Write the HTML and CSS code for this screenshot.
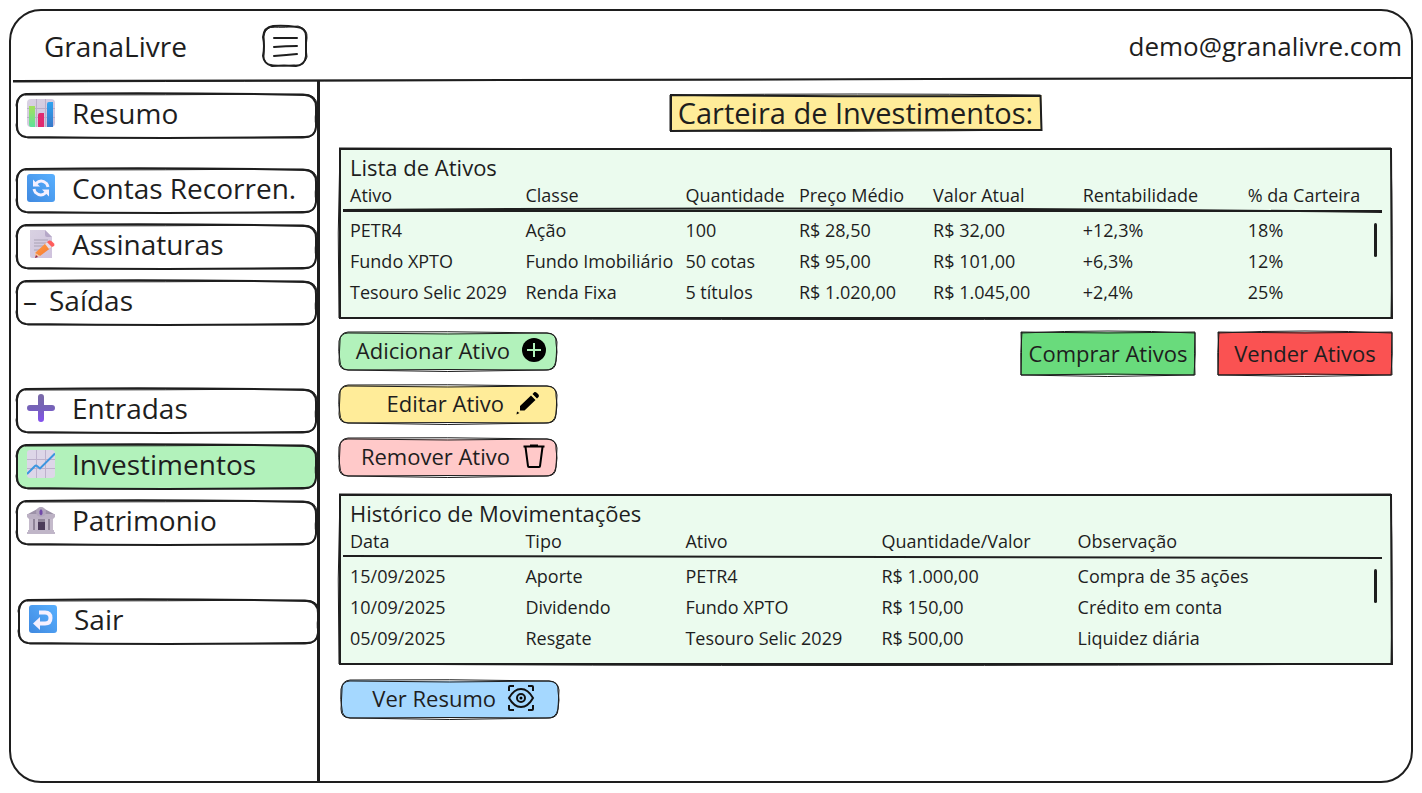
FILE: index.html
```html
<!DOCTYPE html>
<html lang="pt-BR">
<head>
<meta charset="utf-8">
<meta name="viewport" content="width=device-width, initial-scale=1">
<title>GranaLivre - Investimentos</title>
<link rel="stylesheet" href="styles.css">
</head>
<body>
<svg class="defs" aria-hidden="true">
  <defs>
    <linearGradient id="g-paper" x1="0" y1="0" x2="1" y2="1"><stop offset="0" stop-color="#d9d2e2"/><stop offset="1" stop-color="#cfc2dd"/></linearGradient>
    <linearGradient id="g-green" x1="0" y1="0" x2="0" y2="1"><stop offset="0" stop-color="#a6e05c"/><stop offset="1" stop-color="#5fe09a"/></linearGradient>
    <linearGradient id="g-blue" x1="0" y1="0" x2="0" y2="1"><stop offset="0" stop-color="#2fa3f0"/><stop offset="1" stop-color="#3978c8"/></linearGradient>
    <linearGradient id="g-tile" x1="1" y1="0" x2="0" y2="1"><stop offset="0" stop-color="#58b0ff"/><stop offset="1" stop-color="#4089e0"/></linearGradient>
    <linearGradient id="g-plus" x1="0" y1="0" x2="0" y2="1"><stop offset="0" stop-color="#7a6aa8"/><stop offset=".5" stop-color="#7562b8"/><stop offset="1" stop-color="#8450f0"/></linearGradient>
    <linearGradient id="g-pencil" x1="0" y1="0" x2="1" y2="1"><stop offset="0" stop-color="#ffa04a"/><stop offset="1" stop-color="#f5762e"/></linearGradient>
  </defs>
  <symbol id="box-nav" viewBox="0 0 300 45" preserveAspectRatio="none">
    <path class="fill" d="M10 1Q150 -1 288 2Q299 3 299 14L299 34Q298 44 288 44Q150 47 10 44Q1 43 1 33L1 11Q2 2 10 1Z"/>
    <path class="line" d="M10 1Q150 -1 288 2Q299 3 299 14L299 34Q298 44 288 44Q150 46 10 44Q1 43 1 33L1 11Q2 2 10 1Z"/>
    <path class="thin" d="M9 2Q150 2 286 1Q300 1 300 13Q297 25 299 33Q299 45 286 45Q150 44 12 45Q0 43 0 32Q3 22 0 12Q1 0 13 1"/>
  </symbol>
  <symbol id="box-button" viewBox="0 0 218 38" preserveAspectRatio="none">
    <path class="fill" d="M9 0Q109 2 208 1Q217 1 217 10L217 29Q217 38 208 38Q109 37 9 38Q0 38 0 29L0 10Q0 1 9 0Z"/>
    <path class="thin" d="M9 0Q109 -1 208 1Q217 1 218 10L217 29Q217 38 208 38Q109 41 9 38Q0 38 0 29L1 10Q0 1 9 0Z"/>
    <path class="thin" d="M9 1Q109 3 208 1Q218 2 217 11Q219 20 217 29Q215 39 205 38Q109 37 9 38Q1 37 1 29Q-1 20 0 9Q2 1 9 1"/>
  </symbol>
  <symbol id="box-square" viewBox="0 0 174 43" preserveAspectRatio="none">
    <path class="fill" d="M0 0H174V43H0Z"/>
    <path class="thin" d="M0 0Q87 2 174 0Q173 22 174 43Q87 41 0 43Q1 20 0 0Z"/>
    <path class="thin" d="M0 1Q87 -3 174 1Q175 22 173 43Q87 46 0 43Q-1 20 1 0Z"/>
  </symbol>
  <symbol id="box-title" viewBox="0 0 371 36" preserveAspectRatio="none">
    <path class="fill" d="M0 0H371V36H0Z"/>
    <path class="line" d="M1 0Q180 2 370 1L371 35Q180 34 1 36Z"/>
    <path class="thin" d="M0 0Q190 -2 370 0L371 35Q180 37 0 36Z"/>
  </symbol>
  <symbol id="box-panel" viewBox="0 0 1053 171" preserveAspectRatio="none">
    <path class="fill" d="M0 0H1053V171H0Z"/>
    <path class="line" d="M1 1L1052 1L1053 170L1 170Z"/>
    <path class="thin" d="M0 0Q520 2 1052 0Q1054 90 1052 170Q500 173 0 170Q-2 85 1 0"/>
  </symbol>
</svg>

<div class="app">
  <header class="topbar">
    <div class="brand">
      <span class="brand-name">GranaLivre</span>
      <button class="menu" type="button" aria-label="Menu">
        <svg viewBox="0 0 46 42" aria-hidden="true"><path d="M11 1Q22 0 35 2Q44 3 44 11V31Q43 40 34 41Q22 40 10 41Q2 39 1 31Q3 21 1 12Q2 2 11 1ZM12 13L35 13M12 22Q24 21 35 21M12 31Q25 30 35 29"/><path class="thin" d="M9 2Q25 3 36 1Q46 4 45 13Q43 22 45 32Q42 42 32 40Q22 42 11 40Q0 39 2 29L2 11Q3 2 12 2"/></svg>
      </button>
    </div>
    <span class="account">demo@granalivre.com</span>
    <svg class="topbar-line" viewBox="0 0 1400 6" preserveAspectRatio="none" aria-hidden="true"><path class="line" d="M2 4Q700 5 1400 1"/><path class="thin" d="M2 5Q600 3 1400 1"/></svg>
  </header>

  <div class="body">
    <nav class="sidebar" aria-label="Principal">
      <ul class="group">
        <li><a class="item" href="#resumo"><svg class="sketch"><use href="#box-nav"/></svg>
          <svg class="emoji" viewBox="0 0 28 28" aria-hidden="true"><rect width="28" height="28" rx="4" fill="url(#g-paper)"/><path d="M9.500 0V28M18.500 0V28M0 9.500H28M0 18.500H28" stroke="#b9aec8"/><path d="M2 7H8V28H4Q2 28 2 25Z" fill="url(#g-green)"/><path d="M11 16Q11 14 13 14H17V28H11Z" fill="#e02a70"/><path d="M20 5Q20 3 22 3H26V28H20Z" fill="url(#g-blue)"/></svg>
          Resumo</a></li>
      </ul>
      <ul class="group">
        <li><a class="item" href="#contas"><svg class="sketch"><use href="#box-nav"/></svg>
          <svg class="emoji" viewBox="0 0 28 28" aria-hidden="true"><rect width="28" height="28" rx="3" fill="url(#g-tile)"/><path d="M9 9.500Q14 4.500 19.500 9.500Q20.500 11 21 13M19 18.500Q14 23.500 8.500 18.500Q7.500 17 7 15" fill="none" stroke="#f5f0ff" stroke-width="3"/><path d="M6 5.500V12.500H13ZM22 22.500V15.500H15Z" fill="#f5f0ff"/></svg>
          Contas Recorren.</a></li>
        <li><a class="item" href="#assinaturas"><svg class="sketch"><use href="#box-nav"/></svg>
          <svg class="emoji" viewBox="0 0 28 28" aria-hidden="true"><path d="M3 0H18L25 7V28H5Q3 28 3 26Z" fill="url(#g-paper)"/><path d="M18 0V5Q18 7 20 7H25Z" fill="#b6a8c8"/><path d="M7 10H21M7 13H21M7 16H19M7 20H13" stroke="#a9a2b4"/><path d="M8 23L20 12L25 17L13 26Z" fill="url(#g-pencil)"/><path d="M8 23L13 26L8 28Z" fill="#f5c29a"/><path d="M9 25L8 28L11 27Z" fill="#8c2454"/><path d="M18 14L20 12L25 17L22 19Z" fill="#e6dcea"/><path d="M20 12L22 10.500Q23.500 10 25 11.500L27 13.500Q28 15 27 16L25 17Z" fill="#ff5c5c"/></svg>
          Assinaturas</a></li>
        <li><a class="item item-text" href="#saidas"><svg class="sketch"><use href="#box-nav"/></svg><span>–</span>Saídas</a></li>
      </ul>
      <ul class="group group-entries">
        <li><a class="item" href="#entradas"><svg class="sketch"><use href="#box-nav"/></svg>
          <svg class="emoji" viewBox="0 0 28 28" aria-hidden="true"><path d="M11 3Q11 0 14 0T17 3V11H25Q28 11 28 14T25 17H17V25Q17 28 14 28T11 25V17H3Q0 17 0 14T3 11H11Z" fill="url(#g-plus)"/></svg>
          Entradas</a></li>
        <li><a class="item item-active" href="#investimentos" aria-current="page"><svg class="sketch"><use href="#box-nav"/></svg>
          <svg class="emoji" viewBox="0 0 28 28" aria-hidden="true"><rect width="28" height="28" rx="3" fill="#ddd6e8"/><path d="M9.500 0V28M18.500 0V28M0 9.500H28M0 18.500H28" stroke="#bdb1cc"/><path d="M0 24L8 16Q9 15 10 16L13 18.500L28 3.500" fill="none" stroke="#3b96e0" stroke-width="2"/></svg>
          Investimentos</a></li>
        <li><a class="item" href="#patrimonio"><svg class="sketch"><use href="#box-nav"/></svg>
          <svg class="emoji" viewBox="0 0 28 28" aria-hidden="true"><rect x="2" y="12" width="24" height="13" fill="#8f8498"/><path d="M11 16H18V25H11Z" fill="#4c3c5a"/><path d="M2 13H6V25H2ZM8 13H11V25H8ZM18 13H21V25H18ZM23 13H26V25H23Z" fill="#c4bacb"/><path d="M1 8L14 1L27 8Z" fill="#9d92a8"/><path d="M0 8H28V11L26 13H2L0 11Z" fill="#bcb1c4"/><path d="M1 24H27V26H28V28H0V26H1Z" fill="#c0b6c8"/><circle cx="14" cy="6" r="5" fill="#b3a7be"/><path d="M14 3L15.500 5V8L14 9.500L12.500 8V5Z" fill="#714aa8"/></svg>
          Patrimonio</a></li>
      </ul>
      <ul class="group group-exit">
        <li><a class="item" href="#sair"><svg class="sketch"><use href="#box-nav"/></svg>
          <svg class="emoji" viewBox="0 0 28 28" aria-hidden="true"><rect width="28" height="28" rx="3" fill="url(#g-tile)"/><path d="M10 7.500H16Q21.500 7.500 21.500 13T16 18.500H9" fill="none" stroke="#f5f0ff" stroke-width="4"/><path d="M11 12V25L4 18.500Z" fill="#f5f0ff"/></svg>
          Sair</a></li>
      </ul>
    </nav>

    <main class="content">
      <h1 class="title"><svg class="sketch" aria-hidden="true"><use href="#box-title"/></svg>Carteira de Investimentos:</h1>

      <section class="panel">
        <svg class="sketch" aria-hidden="true"><use href="#box-panel"/></svg>
        <h2 id="ativos">Lista de Ativos</h2>
        <table class="table" aria-labelledby="ativos">
          <colgroup><col class="col-first"><col class="col-second"><col class="col-quantity"><col class="col-price"><col class="col-value"><col class="col-return"><col></colgroup>
          <thead><tr><th>Ativo</th><th>Classe</th><th>Quantidade</th><th>Preço Médio</th><th>Valor Atual</th><th>Rentabilidade</th><th>% da Carteira</th></tr></thead>
          <tbody>
            <tr><td>PETR4</td><td>Ação</td><td>100</td><td>R$ 28,50</td><td>R$ 32,00</td><td>+12,3%</td><td>18%</td></tr>
            <tr><td>Fundo XPTO</td><td>Fundo Imobiliário</td><td>50 cotas</td><td>R$ 95,00</td><td>R$ 101,00</td><td>+6,3%</td><td>12%</td></tr>
            <tr><td>Tesouro Selic 2029</td><td>Renda Fixa</td><td>5 títulos</td><td>R$ 1.020,00</td><td>R$ 1.045,00</td><td>+2,4%</td><td>25%</td></tr>
          </tbody>
        </table>
        <svg class="rule" viewBox="0 0 1040 6" preserveAspectRatio="none" aria-hidden="true"><path class="line" d="M0 3Q500 -1 1040 5"/><path class="line" d="M0 4Q500 5 1040 4"/></svg>
        <span class="thumb"></span>
      </section>

      <div class="actions">
        <div class="stack">
          <button class="btn btn-add" type="button"><svg class="sketch"><use href="#box-button"/></svg>Adicionar Ativo
            <svg class="icon" viewBox="0 0 26 26" aria-hidden="true"><circle cx="13" cy="13" r="12"/><path d="M13 6V20M6 13H20" stroke="#b2f2bb" stroke-width="2"/></svg></button>
          <button class="btn btn-edit" type="button"><svg class="sketch"><use href="#box-button"/></svg>Editar Ativo
            <svg class="icon" viewBox="0 0 26 26" aria-hidden="true"><path d="M5 16L16 5.500L20.500 10L9.500 20.500L5 20.500ZM17.500 4L19.500 2Q20.500 1.500 22 3L23.500 4.500Q24.500 6 23.500 7L22 8.500ZM2 21.500L4.500 23L1.500 24.500Z"/></svg></button>
          <button class="btn btn-remove" type="button"><svg class="sketch"><use href="#box-button"/></svg>Remover Ativo
            <svg class="icon" viewBox="0 0 26 26" aria-hidden="true"><path d="M2.500 3.500H23.500M9 2.500H17M4.500 4L7 23Q7 24 8 24H18Q19 24 19 23L21.500 4" fill="none" stroke="#000" stroke-width="2"/></svg></button>
        </div>
        <div class="trade">
          <button class="btn btn-buy" type="button"><svg class="sketch"><use href="#box-square"/></svg>Comprar Ativos</button>
          <button class="btn btn-sell" type="button"><svg class="sketch"><use href="#box-square"/></svg>Vender Ativos</button>
        </div>
      </div>

      <section class="panel">
        <svg class="sketch" aria-hidden="true"><use href="#box-panel"/></svg>
        <h2 id="historico">Histórico de Movimentações</h2>
        <table class="table" aria-labelledby="historico">
          <colgroup><col class="col-first"><col class="col-second"><col class="col-wide"><col class="col-wide"><col></colgroup>
          <thead><tr><th>Data</th><th>Tipo</th><th>Ativo</th><th>Quantidade/Valor</th><th>Observação</th></tr></thead>
          <tbody>
            <tr><td>15/09/2025</td><td>Aporte</td><td>PETR4</td><td>R$ 1.000,00</td><td>Compra de 35 ações</td></tr>
            <tr><td>10/09/2025</td><td>Dividendo</td><td>Fundo XPTO</td><td>R$ 150,00</td><td>Crédito em conta</td></tr>
            <tr><td>05/09/2025</td><td>Resgate</td><td>Tesouro Selic 2029</td><td>R$ 500,00</td><td>Liquidez diária</td></tr>
          </tbody>
        </table>
        <svg class="rule" viewBox="0 0 1040 6" preserveAspectRatio="none" aria-hidden="true"><path class="line" d="M0 3Q500 5 1040 5"/></svg>
        <span class="thumb"></span>
      </section>

      <button class="btn btn-view" type="button"><svg class="sketch"><use href="#box-button"/></svg>Ver Resumo
        <svg class="icon icon-view" viewBox="0 0 28 28" aria-hidden="true"><g fill="none" stroke="#111" stroke-width="2"><path d="M2 7V3Q2 2 3 2H7M21 2H25Q26 2 26 3V7M26 21V25Q26 26 25 26H21M7 26H3Q2 26 2 25V21"/><path d="M2 14Q7 5 14 5T26 14Q21 23 14 23T2 14Z"/><circle cx="14" cy="14" r="4"/></g><circle cx="14" cy="14" r="1.500"/></svg></button>
    </main>
  </div>
</div>
</body>
</html>
```

FILE: styles.css
```css
* { box-sizing: border-box; }

body {
  margin: 0;
  padding: 9px 9px 10px;
  min-height: 100vh;
  display: flex;
  background: #fff;
  color: #1e1e1e;
  font-family: "Open Sans", "Noto Sans", sans-serif;
}

h1, h2, ul { margin: 0; padding: 0; font-weight: 400; }
ul { list-style: none; }
button { font: inherit; color: inherit; background: none; border: 0; padding: 0; cursor: pointer; }

.defs { position: absolute; width: 0; height: 0; }
.fill { fill: var(--fill, #fff); }
.line, .thin { fill: none; stroke: #1e1e1e; vector-effect: non-scaling-stroke; }
.line { stroke-width: 2px; }
.thin { stroke-width: 1px; }

.sketch {
  position: absolute;
  inset: 0;
  z-index: -1;
  width: 100%;
  height: 100%;
  overflow: visible;
}
.sketch use, symbol { overflow: visible; }

.app {
  flex: 1;
  display: flex;
  flex-direction: column;
  border: 2px solid #1e1e1e;
  border-radius: 32px;
}

.topbar {
  position: relative;
  display: flex;
  justify-content: space-between;
  align-items: center;
  height: 69px;
  padding: 0 9px 0 33px;
}
.topbar-line { position: absolute; left: 0; bottom: -3px; width: 100%; height: 6px; }
.brand { width: 264px; display: flex; justify-content: space-between; align-items: center; }
.brand-name { font-size: 28px; }
.account { font-size: 26px; }
.menu { width: 46px; height: 42px; }
.menu svg { display: block; fill: none; stroke: #1e1e1e; stroke-width: 2; stroke-linecap: round; overflow: visible; }
.menu .thin { stroke-width: 1px; }

.body { flex: 1; display: flex; }

.sidebar {
  flex: none;
  width: 309px;
  padding: 13px 0 20px 5px;
  border-right: 3px solid #1e1e1e;
}
.group { display: grid; gap: 11px; margin-bottom: 30px; }
.group-entries { margin-top: 63px; margin-bottom: 54px; }
.item {
  position: relative;
  isolation: isolate;
  display: flex;
  align-items: center;
  gap: 17px;
  height: 45px;
  padding: 0 4px 5px 11px;
  font-size: 28px;
  line-height: 32px;
  white-space: nowrap;
  color: inherit;
  text-decoration: none;
}
.item-text { gap: 12px; padding-left: 7px; }
.item-active { --fill: #b2f2bb; }
.group-exit { margin-left: 2px; margin-right: -2px; }
.emoji { flex: none; width: 28px; height: 28px; }

.content {
  flex: 1;
  min-width: 0;
  display: flex;
  flex-direction: column;
  padding: 15px 19px 24px 19px;
}

.title {
  --fill: #ffec99;
  position: relative;
  isolation: isolate;
  align-self: center;
  margin: 0 20px 17px 0;
  padding: 0 8px;
  font-size: 29px;
  line-height: 36px;
}

.panel {
  --fill: #ebfbee;
  position: relative;
  isolation: isolate;
  height: 171px;
  padding: 5px 10px 0 11px;
}
.panel h2 { font-size: 22px; line-height: 28px; }

.table { width: 100%; border-collapse: collapse; table-layout: fixed; }
.table th, .table td { padding: 0; text-align: left; font-size: 18px; font-weight: 400; white-space: nowrap; }
.table th { height: 34px; padding-bottom: 9px; line-height: 22px; vertical-align: bottom; }
.table td { height: 31px; line-height: 31px; }
.col-first { width: 17%; }
.col-second { width: 15.5%; }
.col-quantity { width: 11%; }
.col-price { width: 13%; }
.col-value { width: 14.5%; }
.col-return { width: 16%; }
.col-wide { width: 19%; }

.rule { position: absolute; left: 4px; top: 59px; width: calc(100% - 14px); height: 6px; overflow: visible; }
.thumb { position: absolute; top: 75px; right: 15px; width: 3px; height: 34px; border-radius: 2px; background: #1e1e1e; }

.actions {
  display: flex;
  justify-content: space-between;
  align-items: flex-start;
  margin: 13px 0 18px;
}
.stack { display: grid; gap: 15px; }
.trade { display: flex; gap: 23px; }

.btn {
  position: relative;
  isolation: isolate;
  display: flex;
  align-items: center;
  justify-content: flex-end;
  gap: 11px;
  width: 218px;
  height: 38px;
  padding: 0 10px 2px;
  font-size: 22px;
  line-height: 28px;
  white-space: nowrap;
}
.btn-add { --fill: #b2f2bb; }
.btn-edit { --fill: #ffec99; padding-right: 16px; }
.btn-remove { --fill: #ffc9c9; }
.btn-buy, .btn-sell { justify-content: center; width: 174px; height: 43px; }
.btn-buy { --fill: #69db7c; }
.btn-sell { --fill: #fa5252; }
.btn-view { --fill: #a5d8ff; margin: 15px 0 0 2px; padding-right: 24px; }
.icon { flex: none; width: 26px; height: 26px; }
.icon-view { width: 28px; height: 28px; }
```
